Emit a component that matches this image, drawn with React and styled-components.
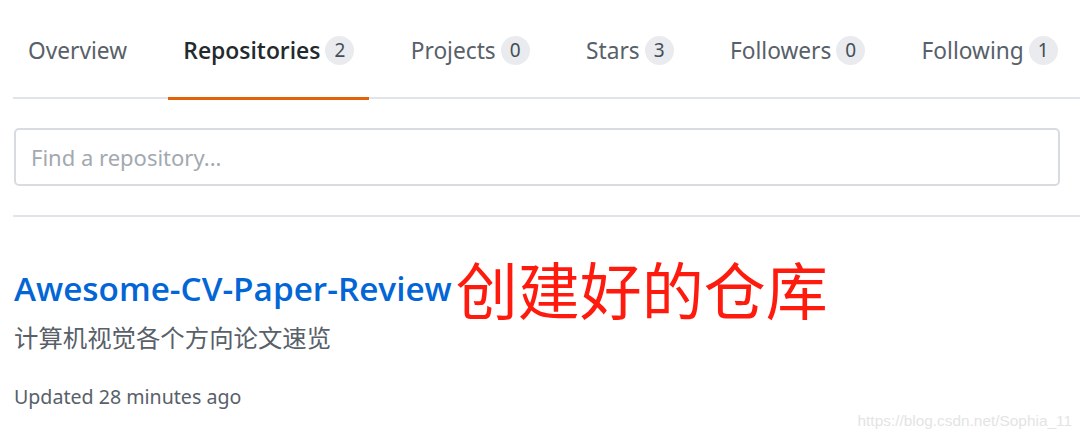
import React from 'react'
import styled, { createGlobalStyle } from 'styled-components'

const GlobalStyle = createGlobalStyle`
  body {
    margin: 0;
    background: #fff;
    font-family: "Noto Sans", "Noto Sans CJK SC", sans-serif;
  }
`

const tabs = [
  { label: 'Overview' },
  { label: 'Repositories', count: 2, selected: true },
  { label: 'Projects', count: 0 },
  { label: 'Stars', count: 3 },
  { label: 'Followers', count: 0 },
  { label: 'Following', count: 1 },
]

const App = () => {
  return (
    <Page>
      <GlobalStyle />
      <TabNav>
        {tabs.map((t) => (
          <Tab key={t.label} $selected={t.selected}>
            {t.label}
            {t.count !== undefined && <Counter>{t.count}</Counter>}
          </Tab>
        ))}
      </TabNav>
      <FilterBar>
        <SearchInput type="text" placeholder="Find a repository..." />
      </FilterBar>
      <RepoItem>
        <TitleRow>
          <RepoName href="#">Awesome-CV-Paper-Review</RepoName>
          <Note>创建好的仓库</Note>
        </TitleRow>
        <Description>计算机视觉各个方向论文速览</Description>
        <Meta>Updated 28 minutes ago</Meta>
      </RepoItem>
      <Watermark>https://blog.csdn.net/Sophia_11</Watermark>
    </Page>
  )
}

const Page = styled.div`
  position: relative;
  width: 1080px;
  height: 436px;
  overflow: hidden;
  padding-left: 13px;
  box-sizing: border-box;
`

const TabNav = styled.nav`
  display: flex;
  height: 99px;
  border-bottom: 2px solid #e1e4e8;
  box-sizing: border-box;
`

const Tab = styled.div`
  display: flex;
  align-items: center;
  height: 100px;
  padding: 4px 15px 0;
  margin-right: 26.3px;
  box-sizing: border-box;
  font-family: ${({ $selected }) => ($selected ? '"Open Sans"' : '"Noto Sans"')}, sans-serif;
  font-size: ${({ $selected }) => ($selected ? '22.9px' : '22.7px')};
  color: ${({ $selected }) => ($selected ? '#24292e' : '#586069')};
  font-weight: ${({ $selected }) => ($selected ? 600 : 400)};
  border-bottom: 3px solid ${({ $selected }) => ($selected ? '#e36209' : 'transparent')};
`

const Counter = styled.span`
  display: inline-block;
  min-width: 29px;
  height: 29px;
  line-height: 29px;
  margin-left: 5px;
  padding: 0 2px;
  border-radius: 15px;
  background: #e9ebee;
  color: #444d56;
  font-family: "Noto Sans", sans-serif;
  font-size: 19px;
  font-weight: 400;
  text-align: center;
  box-sizing: border-box;
`

const FilterBar = styled.div`
  padding: 29px 20px 29px 1px;
  border-bottom: 2px solid #e1e4e8;
`

const SearchInput = styled.input`
  display: block;
  width: 100%;
  height: 58px;
  padding: 0 15px;
  box-sizing: border-box;
  border: 2px solid #d8dce0;
  border-radius: 5px;
  font-family: "Noto Sans", sans-serif;
  font-size: 22px;
  color: #24292e;
  outline: none;
  &::placeholder {
    color: #a3a9b0;
  }
`

const RepoItem = styled.div`
  padding: 38px 0 0 1px;
`

const TitleRow = styled.div`
  display: flex;
  align-items: center;
  height: 66px;
`

const RepoName = styled.a`
  font-family: "Open Sans", sans-serif;
  font-size: 33.3px;
  font-weight: 600;
  color: #0366d6;
  text-decoration: none;
`

const Note = styled.span`
  margin-left: 4px;
  font-family: "Noto Sans CJK SC", sans-serif;
  font-size: 62px;
  color: #ff1a0e;
  line-height: 1;
`

const Description = styled.p`
  margin: 0;
  font-family: "Noto Sans CJK SC", sans-serif;
  font-size: 24.4px;
  line-height: 32px;
  color: #586069;
`

const Meta = styled.p`
  margin: 30px 0 0;
  font-size: 19.6px;
  color: #586069;
`

const Watermark = styled.span`
  position: absolute;
  right: 8px;
  bottom: 6px;
  font-family: "Liberation Sans", sans-serif;
  font-size: 15.4px;
  color: #e4e4e4;
`

export default App
